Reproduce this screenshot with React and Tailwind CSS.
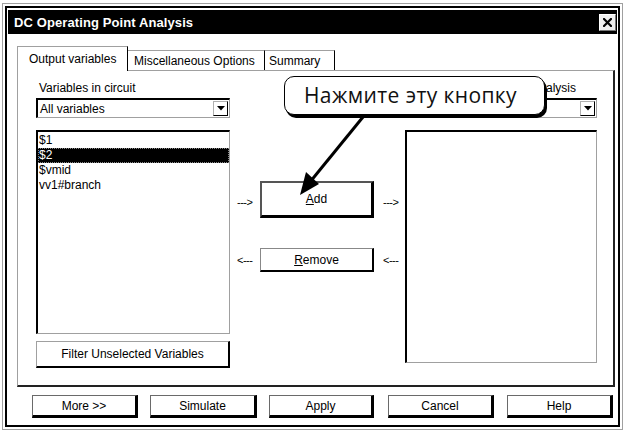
export default function App() {
  const items = ["$1", "$2", "$vmid", "vv1#branch"];
  const btn =
    "h-[23px] flex items-center justify-center border border-[#6a6a6a] border-r-[3px] border-b-[3px] border-r-black border-b-black bg-white text-[12px]";
  return (
    <div className="w-[625px] h-[432px] bg-white relative overflow-hidden font-['Liberation_Sans',Arial,sans-serif] text-[12px] leading-none text-black pl-[2px] pt-[3px]">
      <div className="w-[621px] h-[427px] border border-[#a0a0a0] p-[2px]">
        <div className="w-full h-full border-2 border-black flex flex-col px-[1px] pt-[2px]">
          {/* title bar */}
          <div className="h-[24px] shrink-0 bg-black flex items-center justify-between pl-[6px] pr-[1px]">
            <span className="text-white font-bold text-[13px] tracking-[0.1px]">DC Operating Point Analysis</span>
            <div className="w-[17px] h-[17px] bg-[#eeeeee] border border-white border-r-[#777] border-b-[#777] flex items-center justify-center">
              <svg width="9" height="9" viewBox="0 0 9 9">
                <path d="M1 1 L8 8 M8 1 L1 8" stroke="black" strokeWidth="2.2" strokeLinecap="square" />
              </svg>
            </div>
          </div>

          {/* tabs */}
          <div className="flex items-end pl-[9px] mt-[12px] h-[25px] relative z-10">
            <div className="h-[25px] w-[111px] bg-white border-t border-l border-[#a0a0a0] border-r border-r-black flex items-start pt-[6px] pl-[11px]">
              Output variables
            </div>
            <div className="h-[20px] w-[137px] border-t border-[#a0a0a0] border-r border-r-black flex items-start pt-[4px] pl-[6px] mb-[1px]">
              Miscellaneous Options
            </div>
            <div className="h-[20px] w-[70px] border-t border-[#a0a0a0] border-r border-r-black flex items-start pt-[4px] pl-[4px] mb-[1px]">
              Summary
            </div>
          </div>

          {/* panel */}
          <div className="ml-[9px] w-[598px] h-[317px] mt-[-1px] border-t border-l border-[#a0a0a0] border-r-2 border-b-2 border-r-[#222] border-b-[#222] flex pl-[18px]">
            {/* left column */}
            <div className="w-[194px] flex flex-col pt-[10px]">
              <div className="h-[14px] pl-[3px] leading-[14px]">Variables in circuit</div>
              <div className="mt-[3px] h-[20px] border-t-2 border-l-2 border-black border-b border-r border-b-[#a0a0a0] border-r-[#a0a0a0] flex items-center justify-between pl-[2px] pr-[1px]">
                <span>All variables</span>
                <div className="w-[15px] h-[15px] border border-[#b0b0b0] border-r-black border-b-black flex items-center justify-center">
                  <svg width="8" height="5" viewBox="0 0 8 5"><path d="M0 0 H8 L4 4.5 Z" fill="black" /></svg>
                </div>
              </div>
              <div className="mt-[12px] h-[204px] border-t-2 border-l-2 border-black border-b border-r border-b-[#a0a0a0] border-r-[#a0a0a0] pt-[1px]">
                {items.map((t, i) => (
                  <div
                    key={t}
                    className={
                      "h-[15px] leading-[15px] pl-[1px] " +
                      (i === 1 ? "bg-black text-white outline outline-1 outline-dotted outline-[#888] -outline-offset-1" : "")
                    }
                  >
                    {t}
                  </div>
                ))}
              </div>
              <div className="mt-[7px] h-[27px] border-t border-l border-[#a0a0a0] border-r-2 border-b-2 border-r-black border-b-black flex items-center justify-center">
                Filter Unselected Variables
              </div>
            </div>

            {/* middle column */}
            <div className="w-[175px] flex flex-col pt-[110px]">
              <div className="flex items-center h-[37px]">
                <span className="w-[30px] pl-[7px] text-[11px] tracking-[-0.5px] pt-[5px]">---&gt;</span>
                <div className="w-[114px] h-[37px] border-2 border-[#555] border-r-[3px] border-b-[3px] border-r-black border-b-black flex items-center justify-center">
                  <span><span className="underline">A</span>dd</span>
                </div>
                <span className="pl-[9px] text-[11px] tracking-[-0.5px] pt-[5px]">---&gt;</span>
              </div>
              <div className="flex items-center h-[24px] mt-[30px]">
                <span className="w-[30px] pl-[7px] text-[11px] tracking-[-0.5px]">&lt;---</span>
                <div className="w-[114px] h-[24px] border border-[#888] border-r-2 border-b-2 border-r-black border-b-black flex items-center justify-center">
                  <span><span className="underline">R</span>emove</span>
                </div>
                <span className="pl-[9px] text-[11px] tracking-[-0.5px]">&lt;---</span>
              </div>
            </div>

            {/* right column */}
            <div className="w-[192px] flex flex-col pt-[10px]">
              <div className="h-[14px] leading-[14px] text-right whitespace-nowrap pr-[21px]">Selected variables for analysis</div>
              <div className="mt-[3px] h-[20px] border-t-2 border-l-2 border-black border-b border-r border-b-[#a0a0a0] border-r-[#a0a0a0] flex items-center justify-end pr-[1px]">
                <div className="w-[15px] h-[15px] border border-[#b0b0b0] border-r-black border-b-black flex items-center justify-center">
                  <svg width="8" height="5" viewBox="0 0 8 5"><path d="M0 0 H8 L4 4.5 Z" fill="black" /></svg>
                </div>
              </div>
              <div className="mt-[12px] h-[233px] border-t-2 border-l-2 border-black border-b border-r border-b-[#a0a0a0] border-r-[#a0a0a0]" />
            </div>
          </div>

          {/* bottom buttons */}
          <div className="flex mt-[8px] pl-[24px]">
            <div className={btn + " w-[106px]"}>More &gt;&gt;</div>
            <div className={btn + " w-[107px] ml-[12px]"}>Simulate</div>
            <div className={btn + " w-[105px] ml-[12px]"}>Apply</div>
            <div className={btn + " w-[106px] ml-[14px]"}>Cancel</div>
            <div className={btn + " w-[106px] ml-[13px]"}>Help</div>
          </div>
        </div>
      </div>

      {/* callout */}
      <div className="absolute left-[284px] top-[76px] w-[261px] h-[39px] bg-white border-[1.5px] border-black rounded-[10px] shadow-[2px_3px_0_0_#000] flex items-center justify-center font-['Open_Sans',sans-serif] text-[21px] tracking-[0.4px] text-[#111] pr-[8px]">
        Нажмите эту кнопку
      </div>
      <svg className="absolute left-0 top-0 pointer-events-none" width="625" height="432">
        <line x1="363" y1="117" x2="310" y2="182" stroke="black" strokeWidth="3" />
        <polygon points="300,195 319,184 306,172" fill="black" />
      </svg>
    </div>
  );
}
